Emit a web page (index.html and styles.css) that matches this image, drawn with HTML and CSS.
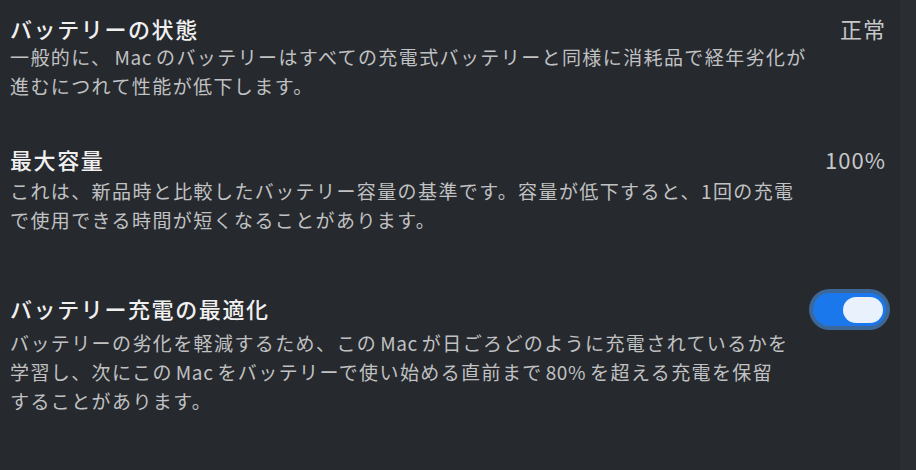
FILE: index.html
```html
<!DOCTYPE html>
<html lang="ja">
<head>
    <meta charset="UTF-8">
    <meta name="viewport" content="width=device-width, initial-scale=1.0">
    <title>バッテリー</title>
    <link rel="stylesheet" href="styles.css">
</head>
<body>

    <div class="panel">
        <!-- Battery health -->
        <div class="row row-health">
            <div class="info">
                <h2 class="title">バッテリーの状態</h2>
                <p class="desc">一般的に、<span class="latin">Mac</span>のバッテリーはすべての充電式バッテリーと同様に消耗品で経年劣化が<br>進むにつれて性能が低下します。</p>
            </div>
            <div class="value">正常</div>
        </div>

        <!-- Maximum capacity -->
        <div class="row row-capacity">
            <div class="info">
                <h2 class="title">最大容量</h2>
                <p class="desc">これは、新品時と比較したバッテリー容量の基準です。容量が低下すると、1回の充電<br>で使用できる時間が短くなることがあります。</p>
            </div>
            <div class="value">100%</div>
        </div>

        <!-- Optimized charging -->
        <div class="row row-optimize">
            <div class="info">
                <h2 class="title">バッテリー充電の最適化</h2>
                <p class="desc">バッテリーの劣化を軽減するため、この<span class="latin">Mac</span>が日ごろどのように充電されているかを<br>学習し、次にこの<span class="latin">Mac</span>をバッテリーで使い始める直前まで<span class="latin">80%</span>を超える充電を保留<br>することがあります。</p>
            </div>
            <label class="switch">
                <input type="checkbox" checked>
                <span class="track"><span class="knob"></span></span>
            </label>
        </div>
    </div>

</body>
</html>
```

FILE: styles.css
```css
body {
    margin: 0;
    height: 470px;
    overflow: hidden;
    font-family: "Noto Sans CJK JP", "Noto Sans", sans-serif;
    background: linear-gradient(to right, #26292d 0, #26292d 900px, #2a2d31 900px);
    color: #ececec;
}

.panel {
    padding: 11px 30px 0 10px;
}

.row {
    display: flex;
    justify-content: space-between;
    align-items: flex-start;
}

.row-capacity {
    margin-top: 42px;
}

.row-optimize {
    margin-top: 57px;
}

.title {
    margin: 0;
    font-size: 22px;
    font-weight: 500;
    line-height: 34px;
    letter-spacing: 1.6px;
    color: #f0f0f0;
}

.desc {
    margin: -3px 0 0;
    font-size: 19px;
    line-height: 29px;
    letter-spacing: 1.4px;
    color: #c0c1c3;
}

.row-capacity .desc {
    margin-top: 0;
}

.row-optimize .desc {
    margin-top: 3px;
}

.latin {
    margin: 0 4px 0 3px;
    letter-spacing: 0.6px;
}

.value {
    font-size: 22px;
    line-height: 34px;
    letter-spacing: 1px;
    color: #c6c7c9;
}

/* Toggle switch */
.switch {
    margin: 2px 0 0 0;
    cursor: pointer;
}

.switch input {
    display: none;
}

.track {
    display: flex;
    justify-content: flex-end;
    align-items: center;
    width: 73px;
    height: 33px;
    padding: 0 3px;
    box-sizing: border-box;
    border-radius: 17px;
    background-color: #1b78ec;
    box-shadow: 0 0 0 4px rgba(70, 130, 200, 0.7);
}

.knob {
    width: 40px;
    height: 26px;
    border-radius: 13px;
    background-color: #e9f1fd;
}
```
